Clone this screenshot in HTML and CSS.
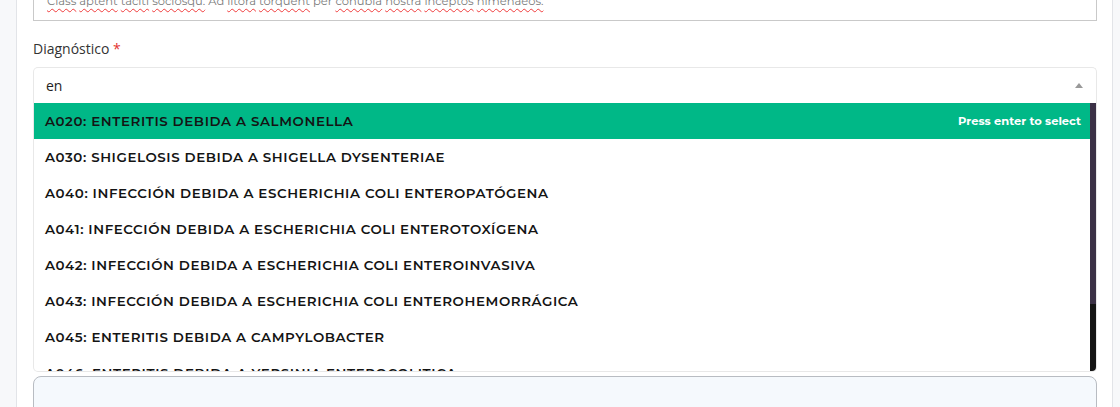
FILE: index.html
```html
<!DOCTYPE html>
<html lang="es">
<head>
  <meta charset="UTF-8" />
  <title>Consulta - Diagnóstico</title>
  <meta name="viewport" content="width=device-width, initial-scale=1.0" />
  <link rel="stylesheet" href="styles.css">
</head>
<body>
  <div class="panel">
    <div class="notes">
      <p>Lorem ipsum dolor sit amet, consectetur adipiscing elit. Sed non risus suspendisse lectus tortor dignissim sit amet.</p>
      <p><span class="typo">Class</span> <span class="typo">aptent</span> <span class="typo">taciti</span> <span class="typo">sociosqu.</span> Ad <span class="typo">litora</span> <span class="typo">torquent</span> per <span class="typo">conubia</span> <span class="typo">nostra</span> <span class="typo">inceptos</span> <span class="typo">himenaeos.</span></p>
    </div>

    <label class="field-label">Diagnóstico <span class="required">*</span></label>

    <div class="multiselect">
      <div class="multiselect-input">
        <span class="query">en</span>
        <span class="caret"></span>
      </div>

      <div class="dropdown">
        <ul class="options">
          <li class="option highlighted">
            <span>A020: ENTERITIS DEBIDA A SALMONELLA</span>
            <span class="hint">Press enter to select</span>
          </li>
          <li class="option">A030: SHIGELOSIS DEBIDA A SHIGELLA DYSENTERIAE</li>
          <li class="option">A040: INFECCIÓN DEBIDA A ESCHERICHIA COLI ENTEROPATÓGENA</li>
          <li class="option">A041: INFECCIÓN DEBIDA A ESCHERICHIA COLI ENTEROTOXÍGENA</li>
          <li class="option">A042: INFECCIÓN DEBIDA A ESCHERICHIA COLI ENTEROINVASIVA</li>
          <li class="option">A043: INFECCIÓN DEBIDA A ESCHERICHIA COLI ENTEROHEMORRÁGICA</li>
          <li class="option">A045: ENTERITIS DEBIDA A CAMPYLOBACTER</li>
          <li class="option">A046: ENTERITIS DEBIDA A YERSINIA ENTEROCOLITICA</li>
          <li class="option">A047: ENTEROCOLITIS DEBIDA A CLOSTRIDIUM DIFFICILE</li>
          <li class="option">A048: OTRAS INFECCIONES INTESTINALES BACTERIANAS ESPECIFICADAS</li>
        </ul>
        <div class="scrollbar"><div class="scroll-thumb"></div></div>
      </div>
    </div>

    <div class="next-box"></div>
  </div>
</body>
</html>
```

FILE: styles.css
```css
body {
  margin: 0;
  background: #f7f8fa;
  font-family: 'Open Sans', 'Noto Sans', sans-serif;
  height: 407px;
  overflow: hidden;
}

.panel {
  margin: 0 7px 0 16px;
  padding: 0 15px 0 16px;
  background: #fff;
  border-left: 1px solid #e2e4e8;
  border-right: 1px solid #e2e4e8;
  min-height: 407px;
}

.notes {
  margin-top: -31px;
  padding: 6px 13px 10px;
  border: 1px solid #c9c9c9;
  font-family: 'Montserrat', 'Inter', sans-serif;
  font-size: 11.5px;
  line-height: 17px;
  color: #7a7a7a;
  overflow: hidden;
}

.notes p {
  margin: 0;
  white-space: nowrap;
}

.typo {
  text-decoration: underline wavy #f03c3c;
  text-decoration-thickness: 1px;
  text-underline-offset: 3px;
}

.field-label {
  display: block;
  margin-top: 18px;
  font-size: 14px;
  line-height: 20px;
  color: #333;
}

.required {
  color: #e3342f;
}

.multiselect {
  position: relative;
  margin-top: 8px;
}

.multiselect-input {
  display: flex;
  align-items: center;
  justify-content: space-between;
  height: 35px;
  padding: 0 13px 0 12px;
  border: 1px solid #e8e8e8;
  border-bottom: none;
  border-radius: 5px 5px 0 0;
  font-size: 14px;
  color: #222;
}

.caret {
  width: 0;
  height: 0;
  border-left: 4px solid transparent;
  border-right: 4px solid transparent;
  border-bottom: 5px solid #999;
}

.dropdown {
  position: absolute;
  top: 36px;
  left: 0;
  right: 0;
  z-index: 10;
  height: 268px;
  background: #fff;
  border: 1px solid #e8e8e8;
  border-top: none;
  border-radius: 0 0 5px 5px;
  overflow: hidden;
}

.options {
  margin: 0;
  padding: 0;
  list-style: none;
  font-family: 'Montserrat', 'Inter', sans-serif;
  font-weight: 600;
  font-size: 13.4px;
  letter-spacing: 0.6px;
  color: #141414;
}

.option {
  display: flex;
  align-items: center;
  justify-content: space-between;
  height: 36px;
  padding: 0 15px 0 11px;
  white-space: nowrap;
}

.option.highlighted {
  background: #00b887;
}

.hint {
  font-size: 11.5px;
  font-weight: 700;
  letter-spacing: 0;
  color: #fff;
}

.scrollbar {
  position: absolute;
  top: 0;
  right: 0;
  bottom: 0;
  width: 6px;
  background: #141414;
}

.scroll-thumb {
  height: 201px;
  background: #3b3146;
}

.next-box {
  margin-top: 273px;
  height: 60px;
  background: #f5f9fd;
  border: 1px solid #b8bcc2;
  border-radius: 8px;
}
```
